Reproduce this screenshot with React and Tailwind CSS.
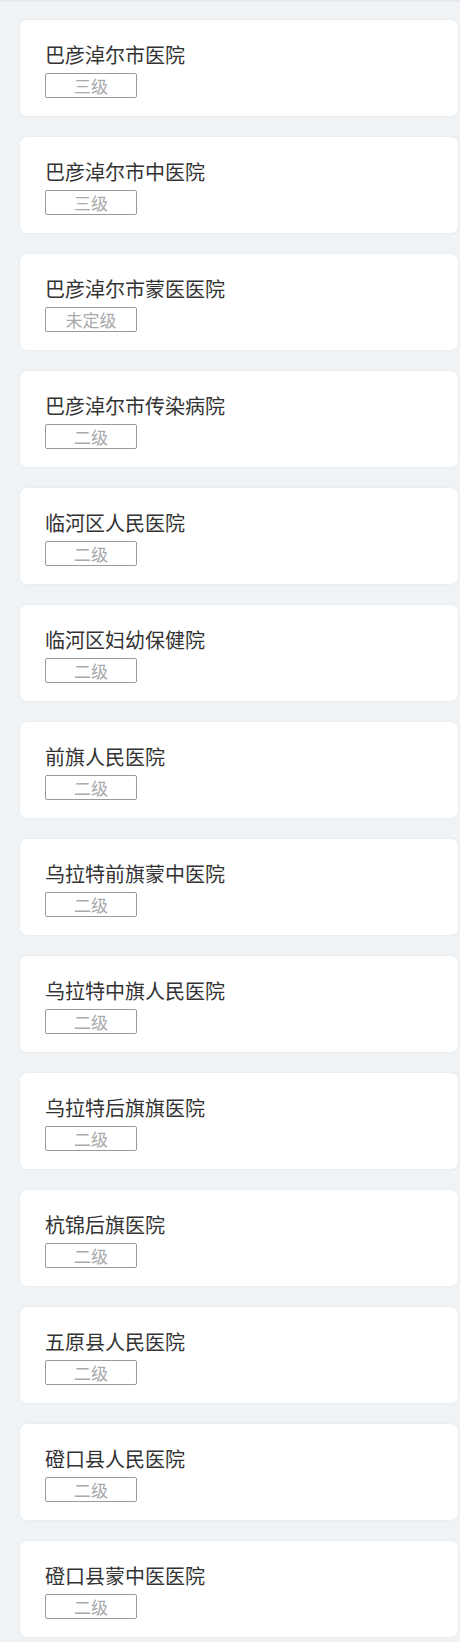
import React from "react";

const HOSPITALS = [
  { name: "巴彦淖尔市医院", level: "三级" },
  { name: "巴彦淖尔市中医院", level: "三级" },
  { name: "巴彦淖尔市蒙医医院", level: "未定级" },
  { name: "巴彦淖尔市传染病院", level: "二级" },
  { name: "临河区人民医院", level: "二级" },
  { name: "临河区妇幼保健院", level: "二级" },
  { name: "前旗人民医院", level: "二级" },
  { name: "乌拉特前旗蒙中医院", level: "二级" },
  { name: "乌拉特中旗人民医院", level: "二级" },
  { name: "乌拉特后旗旗医院", level: "二级" },
  { name: "杭锦后旗医院", level: "二级" },
  { name: "五原县人民医院", level: "二级" },
  { name: "磴口县人民医院", level: "二级" },
  { name: "磴口县蒙中医医院", level: "二级" },
];

export default function App() {
  return (
    <div
      className="min-h-[1642px] overflow-hidden border-t-2 border-[#e6eaee] bg-[#eff3f6] pl-[19px] pt-[17px]"
      style={{ fontFamily: '"Noto Sans CJK SC", "Noto Sans", sans-serif' }}
    >
      <div className="flex w-[440px] flex-col gap-[19px]">
        {HOSPITALS.map((h, i) => (
          <HospitalCard key={i} hospital={h} />
        ))}
      </div>
    </div>
  );
}

function HospitalCard({ hospital }) {
  return (
    <div className="h-[98px] rounded-[8px] border border-[#e9edf0] bg-white pl-[25px] pt-[20px]">
      <h3 className="text-[20px] leading-[30px] font-normal text-[#333]">{hospital.name}</h3>
      <div className="mt-[3px] flex h-[25px] w-[92px] items-center justify-center rounded-[2px] border border-[#9a9a9a] text-[17px] leading-none text-[#aaa]">
        {hospital.level}
      </div>
    </div>
  );
}
